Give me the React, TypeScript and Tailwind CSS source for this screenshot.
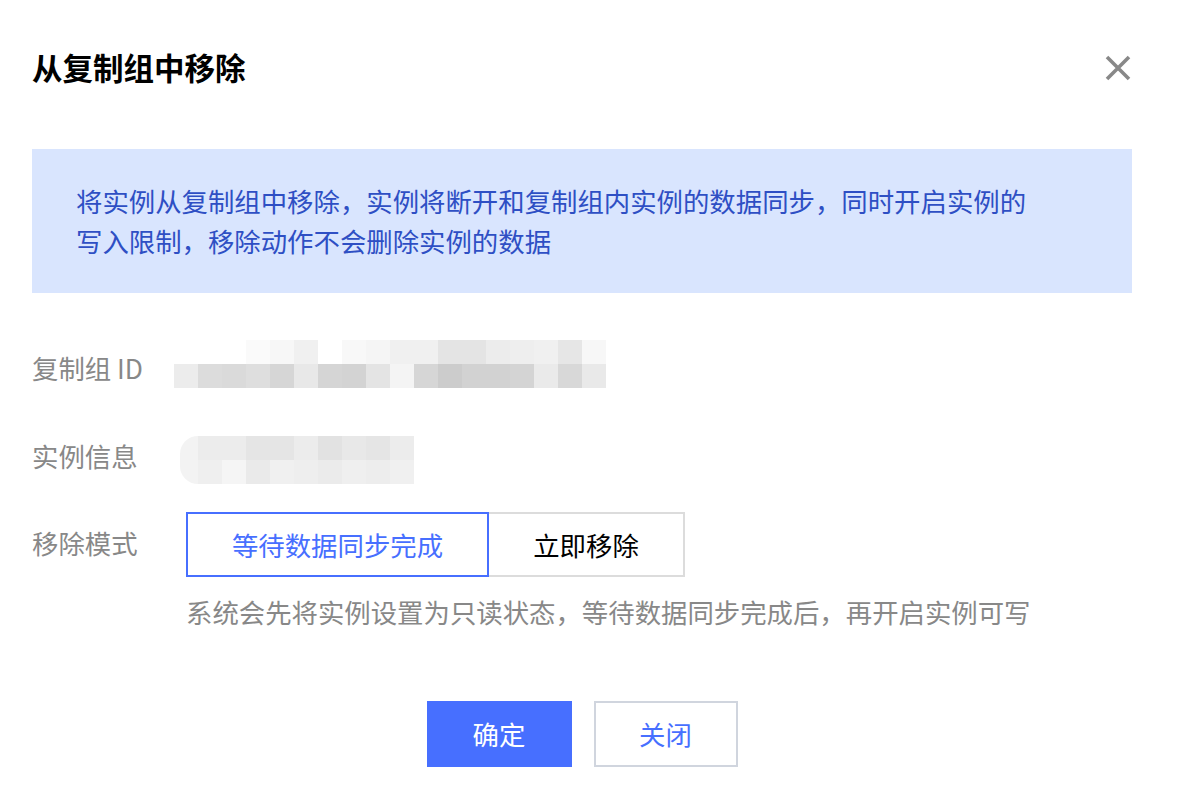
import React, { useState } from 'react';

// 打码后的复制组 ID（两行像素块）
const idRows = [
  ['bg-white', 'bg-white', 'bg-white', 'bg-[#fafafa]', 'bg-[#f7f7f7]', 'bg-[#f0f0f0]', 'bg-white', 'bg-[#f8f8f8]', 'bg-[#f5f5f5]', 'bg-[#f0f0f0]', 'bg-[#f0f0f0]', 'bg-[#e4e4e4]', 'bg-[#e4e4e4]', 'bg-[#ececec]', 'bg-[#eeeeee]', 'bg-[#f0f0f0]', 'bg-[#e6e6e6]', 'bg-[#f7f7f7]'],
  ['bg-[#ececec]', 'bg-[#dcdcdc]', 'bg-[#dadada]', 'bg-[#dedede]', 'bg-[#d6d6d6]', 'bg-[#e8e8e8]', 'bg-[#d5d5d5]', 'bg-[#d3d3d3]', 'bg-[#e4e4e4]', 'bg-[#f4f4f4]', 'bg-[#d6d6d6]', 'bg-[#cccccc]', 'bg-[#d2d2d2]', 'bg-[#d2d2d2]', 'bg-[#d4d4d4]', 'bg-[#eaeaea]', 'bg-[#d8d8d8]', 'bg-[#e9e9e9]'],
];

// 打码后的实例信息
const instRows = [
  ['bg-[#ececec]', 'bg-[#ececec]', 'bg-[#e5e5e5]', 'bg-[#e5e5e5]', 'bg-[#ececec]', 'bg-[#e2e2e2]', 'bg-[#e8e8e8]', 'bg-[#e5e5e5]', 'bg-[#ececec]'],
  ['bg-[#efefef]', 'bg-[#f5f5f5]', 'bg-[#eaeaea]', 'bg-[#f0f0f0]', 'bg-[#eeeeee]', 'bg-[#ebebeb]', 'bg-[#efefef]', 'bg-[#ededed]', 'bg-[#f0f0f0]'],
];

const Mosaic = ({ rows }: { rows: string[][] }) => (
  <div className="flex flex-col">
    {rows.map((row, i) => (
      <div key={i} className="flex">
        {row.map((c, j) => (
          <div key={j} className={`w-[24px] h-[24px] ${c}`} />
        ))}
      </div>
    ))}
  </div>
);

const App = () => {
  const [mode, setMode] = useState<'wait' | 'now'>('wait');

  return (
    <div
      className="w-[1164px] bg-white px-[32px] pt-[47px] pb-[32px] text-[26.4px]"
      style={{ fontFamily: '"Noto Sans CJK SC", "Noto Sans", sans-serif' }}
    >
      <div className="flex items-center justify-between h-[40px]">
        <h2 className="text-[30.5px] leading-[40px] font-bold text-black">从复制组中移除</h2>
        <button className="w-[28px] h-[28px] mt-[2px] flex items-center justify-center">
          <svg width="28" height="28" viewBox="0 0 28 28">
            <path d="M3 3 L25 25 M25 3 L3 25" stroke="#888888" strokeWidth="3.6" />
          </svg>
        </button>
      </div>

      <div className="mt-[62px] bg-[#d9e5fe] py-[32px] pl-[44px] pr-[44px] text-[#2e4fc4] leading-[40px]">
        <p>将实例从复制组中移除，实例将断开和复制组内实例的数据同步，同时开启实例的</p>
        <p>写入限制，移除动作不会删除实例的数据</p>
      </div>

      <div className="mt-[47px] flex flex-col">
        <div className="flex items-start h-[48px]">
          <span className="w-[142px] mt-[8px] leading-[40px] text-[#888888]">复制组 ID</span>
          <Mosaic rows={idRows} />
        </div>

        <div className="mt-[48px] flex items-start h-[48px]">
          <span className="w-[148px] mt-[0px] leading-[40px] text-[#888888]">实例信息</span>
          <div className="flex">
            <div className="w-[18px] h-[48px] rounded-l-full bg-[#f3f3f3]" />
            <Mosaic rows={instRows} />
          </div>
        </div>

        <div className="mt-[28px] flex items-start">
          <span className="w-[154px] mt-[11px] leading-[40px] text-[#888888]">移除模式</span>
          <div className="flex flex-col">
            <div className="flex h-[65px]">
              <button
                onClick={() => setMode('wait')}
                className={`w-[303px] h-full border-2 ${mode === 'wait' ? 'border-[#476fff] text-[#476fff]' : 'border-[#dcdcdc] text-black'}`}
              >
                等待数据同步完成
              </button>
              <button
                onClick={() => setMode('now')}
                className={`w-[196px] h-full border-2 border-l-0 ${mode === 'now' ? 'border-[#476fff] text-[#476fff]' : 'border-[#dcdcdc] text-black'}`}
              >
                立即移除
              </button>
            </div>
            <p className="mt-[15px] leading-[40px] text-[#888888]">
              系统会先将实例设置为只读状态，等待数据同步完成后，再开启实例可写
            </p>
          </div>
        </div>
      </div>

      <div className="mt-[69px] flex justify-center gap-[22px]">
        <button className="w-[145px] h-[66px] bg-[#476fff] text-white">确定</button>
        <button className="w-[144px] h-[66px] border-2 border-[#d0d5de] text-[#476fff]">关闭</button>
      </div>
    </div>
  );
};

export default App;
